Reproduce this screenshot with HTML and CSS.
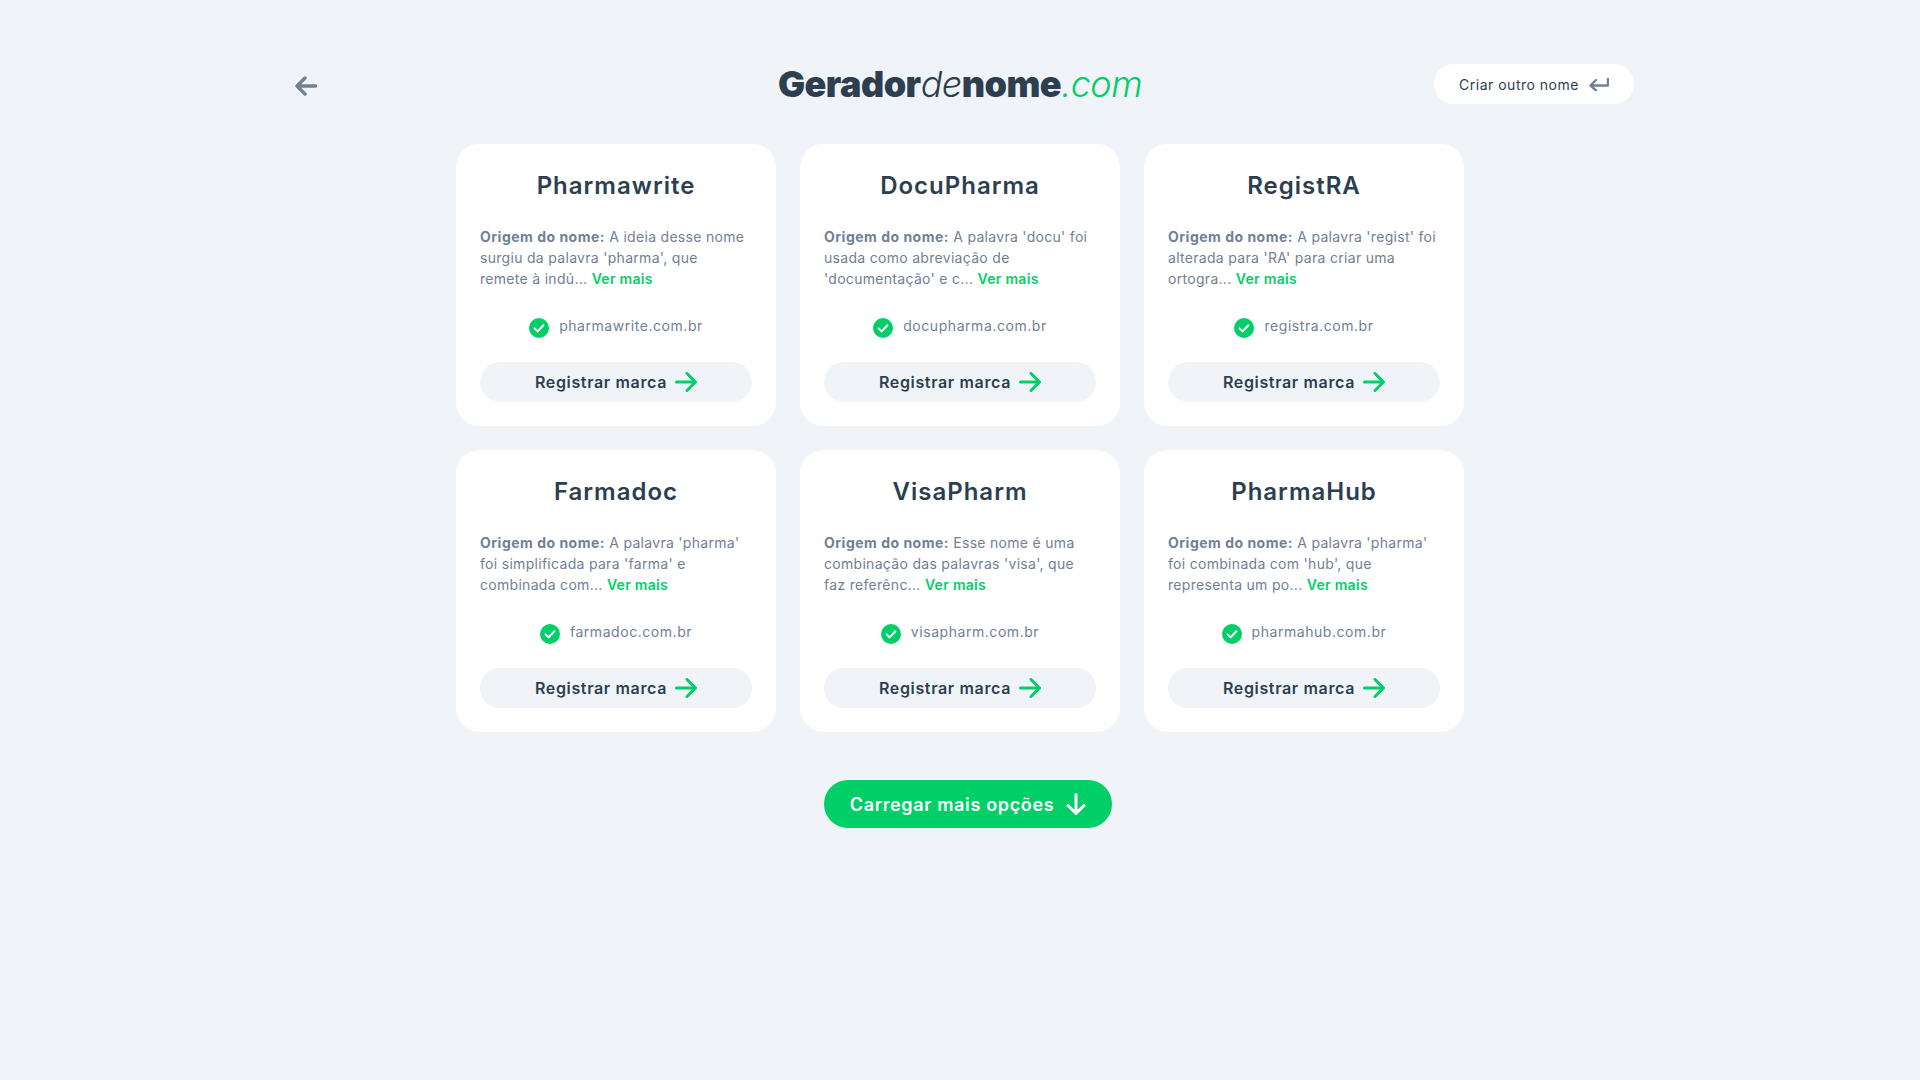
FILE: index.html
```html
<!DOCTYPE html>
<html lang="pt-BR">
	<head>
		<meta charset="UTF-8">
		<link rel="stylesheet" href="styles.css">
		<title>Gerador de nome</title>
	</head>
	<body>
		<svg class="defs" width="0" height="0">
			<symbol id="check" viewBox="0 0 20 20">
				<circle cx="10" cy="10" r="10" fill="#00cf68"/>
				<path d="M5.6 10.4l3 3 5.8-6.2" fill="none" stroke="#fff" stroke-width="2" stroke-linecap="round" stroke-linejoin="round"/>
			</symbol>
			<symbol id="arrow" viewBox="0 0 22 20">
				<path d="M1.5 10h19M12 1.5l8.5 8.5-8.5 8.5" fill="none" stroke="currentColor" stroke-width="3" stroke-linecap="round" stroke-linejoin="round"/>
			</symbol>
		</svg>

		<header class="topbar">
			<a class="back" href="#">
				<svg width="22" height="20" viewBox="0 0 22 20"><path d="M20.5 10h-18M10 2L2 10l8 8" fill="none" stroke="#718096" stroke-width="3.4" stroke-linecap="round" stroke-linejoin="round"/></svg>
			</a>
			<h1 class="logo"><b>Gerador</b><i>de</i><b>nome</b><em>.com</em></h1>
			<a class="again" href="#">
				Criar outro nome
				<svg width="20" height="14" viewBox="0 0 20 14"><path d="M19 2v6.5H2M7 3L1.5 8.5 7 13.5" fill="none" stroke="#718096" stroke-width="2.4" stroke-linecap="round" stroke-linejoin="round"/></svg>
			</a>
		</header>

		<main class="grid">
			<section class="card">
				<h2>Pharmawrite</h2>
				<p class="origin"><strong>Origem do nome:</strong> A ideia desse nome<br>surgiu da palavra 'pharma', que<br>remete à indú... <a href="#">Ver mais</a></p>
				<div class="domain"><svg width="20" height="20"><use href="#check"/></svg><span>pharmawrite.com.br</span></div>
				<a class="register" href="#">Registrar marca <svg width="22" height="20"><use href="#arrow"/></svg></a>
			</section>
			<section class="card">
				<h2>DocuPharma</h2>
				<p class="origin"><strong>Origem do nome:</strong> A palavra 'docu' foi<br>usada como abreviação de<br>'documentação' e c... <a href="#">Ver mais</a></p>
				<div class="domain"><svg width="20" height="20"><use href="#check"/></svg><span>docupharma.com.br</span></div>
				<a class="register" href="#">Registrar marca <svg width="22" height="20"><use href="#arrow"/></svg></a>
			</section>
			<section class="card">
				<h2>RegistRA</h2>
				<p class="origin"><strong>Origem do nome:</strong> A palavra 'regist' foi<br>alterada para 'RA' para criar uma<br>ortogra... <a href="#">Ver mais</a></p>
				<div class="domain"><svg width="20" height="20"><use href="#check"/></svg><span>registra.com.br</span></div>
				<a class="register" href="#">Registrar marca <svg width="22" height="20"><use href="#arrow"/></svg></a>
			</section>
			<section class="card">
				<h2>Farmadoc</h2>
				<p class="origin"><strong>Origem do nome:</strong> A palavra 'pharma'<br>foi simplificada para 'farma' e<br>combinada com... <a href="#">Ver mais</a></p>
				<div class="domain"><svg width="20" height="20"><use href="#check"/></svg><span>farmadoc.com.br</span></div>
				<a class="register" href="#">Registrar marca <svg width="22" height="20"><use href="#arrow"/></svg></a>
			</section>
			<section class="card">
				<h2>VisaPharm</h2>
				<p class="origin"><strong>Origem do nome:</strong> Esse nome é uma<br>combinação das palavras 'visa', que<br>faz referênc... <a href="#">Ver mais</a></p>
				<div class="domain"><svg width="20" height="20"><use href="#check"/></svg><span>visapharm.com.br</span></div>
				<a class="register" href="#">Registrar marca <svg width="22" height="20"><use href="#arrow"/></svg></a>
			</section>
			<section class="card">
				<h2>PharmaHub</h2>
				<p class="origin"><strong>Origem do nome:</strong> A palavra 'pharma'<br>foi combinada com 'hub', que<br>representa um po... <a href="#">Ver mais</a></p>
				<div class="domain"><svg width="20" height="20"><use href="#check"/></svg><span>pharmahub.com.br</span></div>
				<a class="register" href="#">Registrar marca <svg width="22" height="20"><use href="#arrow"/></svg></a>
			</section>
		</main>

		<div class="more-row">
			<a class="more" href="#">
				Carregar mais opções
				<svg width="20" height="22" viewBox="0 0 20 22"><path d="M10 1.5v19M2 12.5l8 8 8-8" fill="none" stroke="#fff" stroke-width="3" stroke-linecap="round" stroke-linejoin="round"/></svg>
			</a>
		</div>
	</body>
</html>
```

FILE: styles.css
```css
body {
	margin: 0;
	min-height: 1080px;
	background: #f0f4f8;
	font-family: 'Inter', 'Liberation Sans', sans-serif;
	color: #2d3e50;
}
a {
	text-decoration: none;
}
.defs {
	display: block;
}
.topbar {
	display: grid;
	grid-template-columns: 1fr auto 1fr;
	align-items: center;
	width: 1340px;
	height: 40px;
	margin: 0 auto;
	padding: 64px 0 40px;
}
.back {
	display: flex;
	padding: 4px 0 0 5px;
}
.logo {
	margin: 0;
	font-size: 36px;
	font-weight: 400;
	letter-spacing: -0.55px;
	line-height: 40px;
}
.logo b {
	font-weight: 900;
}
.logo i {
	font-weight: 300;
}
.logo em {
	font-weight: 300;
	color: #00cf68;
}
.again {
	justify-self: end;
	display: flex;
	align-items: center;
	justify-content: center;
	gap: 10px;
	width: 200px;
	height: 40px;
	margin-right: -4px;
	border-radius: 20px;
	background: #fff;
	font-size: 14px;
	letter-spacing: 0.5px;
	color: #2d3e50;
}
.grid {
	display: grid;
	grid-template-columns: repeat(3, 320px);
	gap: 24px;
	justify-content: center;
}
.card {
	box-sizing: border-box;
	height: 282px;
	padding: 24px;
	border-radius: 24px;
	background: #fff;
}
.card h2 {
	margin: 0 0 22px;
	font-size: 24px;
	font-weight: 600;
	letter-spacing: 1px;
	line-height: 36px;
	text-align: center;
}
.origin {
	margin: 0 0 29px;
	font-size: 14px;
	letter-spacing: 0.3px;
	line-height: 21px;
	white-space: nowrap;
	color: #718096;
}
.origin a {
	font-weight: 600;
	color: #00cf68;
}
.origin strong {
	letter-spacing: 0.5px;
}
.domain {
	display: flex;
	justify-content: center;
	gap: 10px;
	height: 20px;
	margin-bottom: 24px;
	font-size: 14px;
	letter-spacing: 0.55px;
	line-height: 16px;
	color: #718096;
}
.register {
	display: flex;
	align-items: center;
	justify-content: center;
	gap: 8px;
	height: 40px;
	border-radius: 20px;
	background: #f0f4f8;
	font-size: 16px;
	font-weight: 600;
	letter-spacing: 0.65px;
	color: #2d3e50;
}
.register svg {
	color: #00cf68;
}
.more-row {
	display: flex;
	justify-content: center;
	padding: 48px 0 0 16px;
}
.more {
	display: flex;
	align-items: center;
	justify-content: center;
	gap: 12px;
	width: 288px;
	height: 48px;
	border-radius: 24px;
	background: #00cf68;
	font-size: 18px;
	font-weight: 600;
	letter-spacing: 0.65px;
	color: #fff;
}
```
